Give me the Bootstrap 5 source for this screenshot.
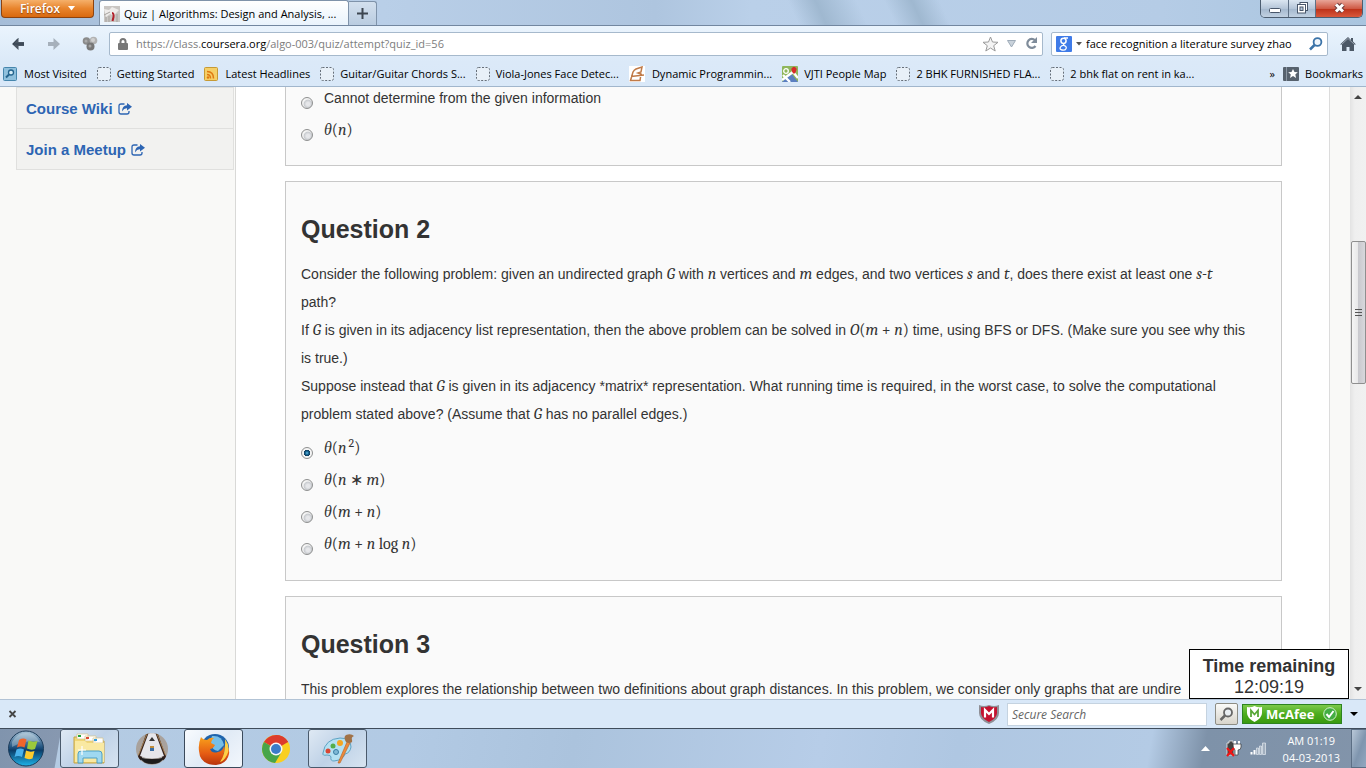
<!DOCTYPE html>
<html lang="en">
<head>
<meta charset="utf-8">
<meta name="viewport" content="width=device-width, initial-scale=1">
<title>Quiz | Algorithms: Design and Analysis, Part 2</title>
<link href="https://cdn.jsdelivr.net/npm/bootstrap@5.3.0/dist/css/bootstrap.min.css" rel="stylesheet">
<style>
body{font-family:"Liberation Sans",Arial,sans-serif;font-size:14px;color:#333;background:#f9f9f7}
svg{flex:none;display:block}
button{border:0;background:none;padding:0}
.ui{font-family:"Open Sans","Noto Sans",sans-serif;font-size:11px;line-height:16px;color:#000}
.ui a{color:#000;text-decoration:none;white-space:nowrap}
/* title bar */
.titlebar{height:26px;background:linear-gradient(65deg,transparent 58%,#9fb8d0 60%,transparent 63%,transparent 65%,#9fb8d0 67%,transparent 69%),linear-gradient(90deg,#a5bdd8,#b9cfe8 28%,#aec5df 48%,#bad0e9 55%,#b5cce6 85%,#a9c5df);border-bottom:1px solid #7287a0}
.fx-btn{width:93px;height:18px;margin-left:1px;background:linear-gradient(#f5b06a,#e8842c 50%,#d9690f);border:1px solid #8c4310;border-top:0;border-radius:0 0 4px 4px;color:#fff;font-weight:600;font-size:12px;text-shadow:0 1px 1px #8c4310}
.page-tab{width:250px;height:25px;margin-left:5px;background:linear-gradient(#fff,#e9f3fc);border:1px solid #7f93aa;border-bottom:0;border-radius:3px 3px 0 0;padding:2px 0 0 4px}
.plus-tab{width:28px;height:24px;background:linear-gradient(#d3e0ee,#b9cce0);border:1px solid #7f93aa;border-left:0;border-bottom:0;border-radius:0 3px 0 0}
.win-btns{height:18px;margin-right:3px;border:1px solid #4c5d70;border-top:0;border-radius:0 0 5px 5px;overflow:hidden}
.win-btns button{width:27px;background:linear-gradient(#dbe6f1,#b4c5d8 50%,#a3b7cd 51%,#c1d1e2)}
.win-btns button+button{border-left:1px solid #5f7186}
.win-btns .closer{width:47px;background:linear-gradient(#e8a598,#cf5a45 50%,#bb3018 51%,#d9583b)}
/* toolbars */
.toolbars{background:linear-gradient(#eaf4fd,#dbe9f8 60%,#d9e8f8);border-bottom:1px solid #a1b6cc}
.navrow{height:35px;padding:0 10px}
.urlbox{margin-left:11px}
.field-box{height:24px;background:#fff;border:1px solid #a6b9cc;border-radius:2px}
.field-box input{border:0;outline:0;background:none;padding:0;min-width:0;font:inherit;color:#000}
.searchbox{flex:0 0 277px}
.grey{color:#7d7d7d}
.bookrow{height:25px;padding:0 3px}
.bk-item{display:flex;align-items:center;gap:6px;margin-right:10px}
/* page */
.viewport{min-height:0;flex:1 1 0}
.side{width:236px;padding-left:16px;border-right:1px solid #d9d9d7}
.side nav{border:1px solid #e0e0de;border-top:0;margin-right:1px}
.side a{display:flex;align-items:center;gap:5px;height:41px;padding:2px 0 0 9px;background:#f2f2f0;border-top:1px solid #e0e0de;color:#2d65b3;font-weight:bold;font-size:15px;text-decoration:none}
.sheet{background:#fff;padding:0 47px 0 49px;border-right:1px solid #dcdcdc;min-width:0}
.quiz{background:#fafafa;border:1px solid #c8c8c8;padding:0 15px;margin-bottom:15px}
.quiz.first{margin-top:-4px;padding-bottom:17px}
.quiz h2{font-size:25px;line-height:30px;font-weight:bold;margin:0;padding:32px 0 16px}
.quiz p{line-height:28px;margin:0;white-space:nowrap}
.opts{padding-top:6px}
.quiz .opts.last{padding-bottom:18px}
.opt{display:flex;height:32px;gap:11px;line-height:28px}
.opt input{appearance:none;width:12px;height:12px;margin:13px 0 0;border:1px solid #8e8f8f;border-radius:50%;background:radial-gradient(circle at 60% 60%,#e6e7ea 20%,#c9ccd0 45%,#f4f4f4 58%)}
.opt input:checked{background:radial-gradient(circle at 50% 50%,#6fc3e8 0,#1a6d9c 20%,#0f3c5c 42%,#f4f4f4 50%)}
.mt{font-family:Cambria,"Liberation Serif",serif;font-size:16px;line-height:20px;font-style:italic}
.mt b{font-weight:normal;font-style:normal}
.mt sup{font-size:12px;font-style:normal;line-height:0;padding-left:2px}
.rail{width:20px;background:#f9f9f7}
.scroller{width:16px;background:linear-gradient(90deg,#e3e3e3,#efefef 30%,#f1f1f1)}
.above{flex:141 1 0}
.below{flex:300 1 0}
.thumb{width:15px;height:143px;border:1px solid #8f8f8f;border-radius:2px;background:linear-gradient(90deg,#f5f5f5,#e8e8e9 45%,#c9c9ce 50%,#d8d8dc)}
.timer{right:17px;bottom:0;width:160px;height:50px;border:1px solid #000;background:#fff;text-align:center;font-size:18px;line-height:21px;padding-top:6px}
/* find bar */
.mcbar{height:29px;background:#d9e8f8;border-top:1px solid #b2c3d5}
.mcbar input{width:200px;height:23px;border:1px solid #c5d3e0;background:#fff;padding:0 4px;font:italic 12px/20px "Open Sans",sans-serif;outline:0}
.mcbar input::placeholder{color:#666;opacity:1;font-size:12px}
.find-btn{width:23px;height:22px;border:1px solid #8d8d85;border-radius:2px;background:linear-gradient(#fafaf8,#d8d5cc)}
.mcafee{width:100px;height:20px;border:1px solid #2d8420;background:linear-gradient(#7cc94a,#4cac1e 50%,#3a9a10);color:#fff;font:bold 13px "Open Sans",sans-serif}
/* taskbar */
.taskbar{height:40px;border-top:1px solid #3f4c5b;background:linear-gradient(100deg,#8094ad 0,#8798b0 60px,#b4cbe3 61px,#b2cae4 30%,#abc3dd 42%,#b7cde8 60%,#afc7e2 70%,#b4cbe5 84%,#7e92a9 88%,#8294aa 100%)}
.task{width:59px;height:39px;display:flex;align-items:center;justify-content:center;border:1px solid transparent;border-radius:3px}
.task.open{border-color:#4a5a6c;background:linear-gradient(135deg,#dfe9f4,#bfd2e7 50%,#d7e4f1)}
.task.active{border-color:#3b4a5b;background:linear-gradient(135deg,#f8fbfe,#e1ebf6 50%,#f3f7fc)}
.tasks{gap:3px}
.clock{color:#fff;font-size:11px;line-height:17px;text-align:center;margin:0 11px 0 16px}
.peek{width:15px;border:1px solid #5b6e84;border-right:0;background:linear-gradient(110deg,#b9c8d8,#7f95ae 55%,#93a8c0)}
</style>
</head>
<body>
<svg width="0" height="0" class="position-absolute" aria-hidden="true">
  <symbol id="blank" viewBox="0 0 14 14"><rect x=".5" y=".5" width="13" height="13" rx="2" fill="#e8f0f8" stroke="#666f79" stroke-dasharray="2 1.5"/></symbol>
  <symbol id="ext" viewBox="0 0 14 12"><path d="M6.500 1H3Q1 1 1 3v6q0 2 2 2h6q2 0 2-2V8" fill="none" stroke="#2d65b3" stroke-width="1.300"/><path d="M9 0l5 3.800L9 7.500V5.300Q6 5 4 8.500q0-6 5-6.300z" fill="#2d65b3"/></symbol>
  <linearGradient id="blue" x2="0" y2="1"><stop stop-color="#a9c4d8"/><stop offset=".45" stop-color="#245783"/><stop offset=".55" stop-color="#0b3c68"/><stop offset="1" stop-color="#1fb4ea"/></linearGradient>
  <linearGradient id="fox" x2="0" y2="1"><stop stop-color="#f9a11b"/><stop offset=".6" stop-color="#e55b13"/><stop offset="1" stop-color="#b8330c"/></linearGradient>
</svg>
<div class="vh-100 d-flex flex-column overflow-hidden">
  <header class="ui flex-shrink-0">
    <div class="titlebar d-flex align-items-start">
      <button class="fx-btn d-flex align-items-center justify-content-center gap-2">Firefox <svg width="7" height="5"><path d="M0 0h7L3.500 4.500z" fill="#fff"/></svg></button>
      <div class="page-tab d-flex align-items-center gap-1 align-self-end">
        <svg width="16" height="16"><rect width="16" height="16" fill="#c9c6c3"/><path d="M0 3l5 1 3-3 7 3-3 3-2 3-4-2-4 3z" fill="#eeecea"/><path d="M0 9l6-3M2 11v5M5 10v6M13 8v8" stroke="#a5a19d"/><path d="M8 7q2 0 1.500 4l-1 4" stroke="#b1202a" stroke-width="2" fill="none"/></svg>
        <span>Quiz | Algorithms: Design and Analysis, ...</span>
      </div>
      <button class="plus-tab d-flex align-items-center justify-content-center align-self-end" aria-label="New tab"><svg width="11" height="11"><path d="M5.500 0v11M0 5.500h11" stroke="#3d4650" stroke-width="2"/></svg></button>
      <div class="win-btns d-flex ms-auto">
        <button aria-label="Minimize" class="d-flex justify-content-center pt-2"><svg width="12" height="5"><rect x=".5" y=".5" width="11" height="4" rx="1" fill="#fff" stroke="#48566a"/></svg></button>
        <button aria-label="Restore" class="d-flex justify-content-center"><svg width="13" height="15"><rect x="4" y="2.500" width="7.500" height="8" fill="#fff" stroke="#48566a"/><rect x="1.500" y="4.500" width="8" height="8.500" fill="#fff" stroke="#48566a"/><rect x="4" y="7" width="3" height="3.500" fill="#b4c5d8" stroke="#48566a"/></svg></button>
        <button aria-label="Close" class="closer d-flex justify-content-center"><svg width="13" height="14"><path d="M3 4.500l7 7M10 4.500l-7 7" stroke="#6c3b3b" stroke-width="5"/><path d="M3 4.500l7 7M10 4.500l-7 7" stroke="#fff" stroke-width="3"/></svg></button>
      </div>
    </div>
    <div class="toolbars">
      <div class="navrow d-flex align-items-center">
        <button aria-label="Back"><svg width="16" height="16"><path d="M8.500 2L2 8l6.500 6v-4H14V6H8.500z" fill="#4a5562"/><path d="M8 2.500L3 8h11" fill="none" stroke="#33404e"/></svg></button>
        <button aria-label="Forward" class="ms-3 ps-1"><svg width="16" height="16"><path d="M7.500 2L14 8l-6.500 6v-4H2V6h5.500z" fill="#a6b0bb"/></svg></button>
        <button aria-label="Add-ons" class="ms-3 ps-1"><svg width="16" height="16"><circle cx="4.500" cy="5" r="3.800" fill="#8b8b8b"/><circle cx="11.500" cy="4.500" r="3.800" fill="#b2b2b2"/><circle cx="8.500" cy="10.500" r="4" fill="#777"/><circle cx="4" cy="5" r="1.500" fill="#aaa"/><circle cx="11" cy="4" r="2" fill="#d0d0d0"/><circle cx="8" cy="10" r="1.500" fill="#a6a6a6"/></svg></button>
        <div class="urlbox field-box d-flex align-items-center flex-grow-1 ps-2 pe-1 gap-2">
          <svg width="10" height="12"><path d="M2.500 6V3.500q0-2.500 2.500-2.500t2.500 2.500V6" fill="none" stroke="#777" stroke-width="2"/><rect y="5" width="10" height="7" rx="1" fill="#777"/></svg>
          <a href="#" class="flex-grow-1"><span class="grey">https://class.</span>coursera.org<span class="grey">/algo-003/quiz/attempt?quiz_id=56</span></a>
          <svg width="17" height="16"><path d="M8.500 1l2 5 5.500.3-4.300 3.400 1.500 5.300-4.700-3-4.700 3 1.500-5.300L1 6.300 6.500 6z" fill="#f4f4f4" stroke="#9b9b9b"/></svg>
          <svg width="10" height="8"><path d="M.5.500h8L4.500 7z" fill="#c9d2db" stroke="#9eabb8"/></svg>
          <svg width="13" height="13"><path d="M10 3.200A4.500 4.500 0 1 0 10.500 9" fill="none" stroke="#7f8c9a" stroke-width="2.200"/><path d="M12 0v6H6z" fill="#7f8c9a"/></svg>
        </div>
        <div class="searchbox field-box d-flex align-items-center ms-2 px-1 gap-1">
          <svg width="16" height="16"><rect width="16" height="16" rx="1" fill="#3f7be8"/><circle cx="7.500" cy="4.800" r="2.600" fill="none" stroke="#fff" stroke-width="1.500"/><path d="M8 2h4M8.500 7.500q-2 1.200 0 2.200 2.500 1 1.500 3t-4 1.300-1.500-3 4-1.500" fill="none" stroke="#fff" stroke-width="1.300"/></svg>
          <svg width="6" height="4"><path d="M0 0h6L3 3.500z" fill="#555"/></svg>
          <input class="flex-grow-1" aria-label="Search" value="face recognition a literature survey zhao">
          <svg width="14" height="14"><circle cx="8.500" cy="5" r="3.900" fill="#eff6fc" stroke="#3b73a8" stroke-width="1.800"/><path d="M5.500 8L1 12.500" stroke="#3b73a8" stroke-width="2.500"/></svg>
        </div>
        <button aria-label="Home" class="ms-2 ps-1"><svg width="16" height="16"><path d="M8 1L0 8.500h2V15h4.500v-4h3v4H14V8.500h2L13 5.500V2h-2v2z" fill="#4c5866"/><path d="M2 8l6-5.500L14 8" fill="none" stroke="#a9b4bf" stroke-width=".8"/></svg></button>
      </div>
      <nav class="bookrow d-flex align-items-center">
        <a class="bk-item" href="#"><svg width="15" height="16"><rect x=".5" y="1.500" width="13" height="13" rx="1" fill="#8fc0dd" stroke="#4686ad"/><circle cx="8" cy="6.500" r="2.500" fill="#d6edf8" stroke="#24648e" stroke-width="1.300"/><path d="M6 8.500L3 11.500" stroke="#24648e" stroke-width="2"/></svg>Most Visited</a>
        <a class="bk-item" href="#"><svg width="14" height="14"><use href="#blank"/></svg>Getting Started</a>
        <a class="bk-item" href="#"><svg width="15" height="16"><rect x=".5" y="1.500" width="13" height="13" rx="1" fill="#f5cf67" stroke="#c69a35"/><path d="M3 5.500q6.500 0 6.500 7M3 8.500q3.500 0 3.500 4" fill="none" stroke="#df7911" stroke-width="1.500"/><circle cx="4" cy="11.500" r="1.200" fill="#df7911"/></svg>Latest Headlines</a>
        <a class="bk-item" href="#"><svg width="14" height="14"><use href="#blank"/></svg>Guitar/Guitar Chords S...</a>
        <a class="bk-item" href="#"><svg width="14" height="14"><use href="#blank"/></svg>Viola-Jones Face Detec...</a>
        <a class="bk-item" href="#"><svg width="17" height="16"><rect width="16" height="16" fill="#fff"/><path d="M1.500 14.500L4 6q1-2 3-3l6-2-1 5-3 1 3 1-1 6.500zM2 10.500L15 9" fill="none" stroke="#c07a47" stroke-width="1.500"/></svg>Dynamic Programmin...</a>
        <a class="bk-item" href="#"><svg width="16" height="16"><rect width="16" height="16" rx="1" fill="#8fb65c"/><path d="M0 16L9 7l7 9z" fill="#5b7fc0"/><path d="M1 9l7 7M0 14l11-8 5 6" fill="none" stroke="#fff" stroke-width="2.400"/><circle cx="4" cy="5" r="2.300" fill="none" stroke="#fff" stroke-width="1.300"/><path d="M12 8Q9 5 9.500 2.500 12-1 14.500 2.500 15 5 12 8z" fill="#d82b2b"/></svg>VJTI People Map</a>
        <a class="bk-item" href="#"><svg width="14" height="14"><use href="#blank"/></svg>2 BHK FURNISHED FLA...</a>
        <a class="bk-item" href="#"><svg width="14" height="14"><use href="#blank"/></svg>2 bhk flat on rent in ka...</a>
        <span class="ms-auto me-2">»</span>
        <a class="bk-item me-0" href="#"><svg width="16" height="14"><rect width="16" height="14" rx="1" fill="#56616d"/><path d="M3.500 0v14" stroke="#8a96a3"/><path d="M10 2l1.500 3 3.300.3-2.500 2.200.8 3.500-3.100-1.900L7 11l.8-3.500L5.200 5.300 8.500 5z" fill="#fff"/></svg>Bookmarks</a>
      </nav>
    </div>
  </header>

  <div class="viewport d-flex position-relative overflow-hidden">
    <aside class="side flex-shrink-0">
      <nav>
        <a href="#">Course Wiki <svg width="14" height="12"><use href="#ext"/></svg></a>
        <a href="#">Join a Meetup <svg width="14" height="12"><use href="#ext"/></svg></a>
      </nav>
    </aside>
    <main class="sheet flex-grow-1">
      <section class="quiz first">
        <div class="opt"><input type="radio" name="q1" id="q1c"><label for="q1c">Cannot determine from the given information</label></div>
        <div class="opt"><input type="radio" name="q1" id="q1d"><label for="q1d" class="mt pt-1">θ<b>(</b>n<b>)</b></label></div>
      </section>
      <section class="quiz">
        <h2>Question 2</h2>
        <p>Consider the following problem: given an undirected graph <span class="mt">G</span> with <span class="mt">n</span> vertices and <span class="mt">m</span> edges, and two vertices <span class="mt">s</span> and <span class="mt">t</span>, does there exist at least one <span class="mt">s-t</span><br>path?</p>
        <p>If <span class="mt">G</span> is given in its adjacency list representation, then the above problem can be solved in <span class="mt">O<b>(</b>m <b>+</b> n<b>)</b></span> time, using BFS or DFS. (Make sure you see why this<br>is true.)</p>
        <p>Suppose instead that <span class="mt">G</span> is given in its adjacency *matrix* representation. What running time is required, in the worst case, to solve the computational<br>problem stated above? (Assume that <span class="mt">G</span> has no parallel edges.)</p>
        <div class="opts last">
          <div class="opt"><input type="radio" name="q2" id="q2a" checked><label for="q2a" class="mt pt-1">θ<b>(</b>n<sup>2</sup><b>)</b></label></div>
          <div class="opt"><input type="radio" name="q2" id="q2b"><label for="q2b" class="mt pt-1">θ<b>(</b>n <b>∗</b> m<b>)</b></label></div>
          <div class="opt"><input type="radio" name="q2" id="q2c"><label for="q2c" class="mt pt-1">θ<b>(</b>m <b>+</b> n<b>)</b></label></div>
          <div class="opt"><input type="radio" name="q2" id="q2d"><label for="q2d" class="mt pt-1">θ<b>(</b>m <b>+</b> n <b>log</b> n<b>)</b></label></div>
        </div>
      </section>
      <section class="quiz pb-4">
        <h2>Question 3</h2>
        <p class="overflow-hidden">This problem explores the relationship between two definitions about graph distances. In this problem, we consider only graphs that are undire</p>
      </section>
    </main>
    <div class="rail flex-shrink-0"></div>
    <div class="scroller flex-shrink-0 d-flex flex-column align-items-center py-2">
      <svg width="8" height="4"><path d="M4 0l4 4H0z" fill="#444"/></svg>
      <div class="above"></div>
      <div class="thumb d-flex align-items-center justify-content-center"><svg width="7" height="9"><path d="M0 1.500h7M0 4.500h7M0 7.500h7" stroke="#555"/></svg></div>
      <div class="below"></div>
      <svg width="8" height="4"><path d="M0 0h8L4 4z" fill="#444"/></svg>
    </div>
    <div class="timer position-absolute"><strong class="d-block">Time remaining</strong>12:09:19</div>
  </div>

  <div class="mcbar ui d-flex align-items-center flex-shrink-0">
    <button aria-label="Close bar" class="ms-2"><svg width="9" height="8"><path d="M1.500 1l6 6M7.500 1l-6 6" stroke="#444" stroke-width="1.800"/></svg></button>
    <svg class="ms-auto me-2" width="20" height="20"><path d="M0 1q5 2 10 0 5 2 10 0v8q0 7-10 11Q0 16 0 9z" fill="#8f8f96"/><path d="M2 3q4 1 8-1 4 2 8 1v6q0 5-8 9-8-4-8-9z" fill="#c41230"/><path d="M6 13.500V6l4 4 4-4v7.500" fill="none" stroke="#fff" stroke-width="2.200"/></svg>
    <input type="text" aria-label="Secure Search" placeholder="Secure Search">
    <button class="find-btn ms-2 d-flex align-items-center justify-content-center" aria-label="Search"><svg width="15" height="15"><circle cx="9" cy="5.500" r="4" fill="#e9eef2" stroke="#666" stroke-width="1.800"/><path d="M6 8.500L1.500 13" stroke="#666" stroke-width="2.500"/></svg></button>
    <button class="mcafee ms-1 d-flex align-items-center px-1"><svg class="me-1" width="15" height="16"><path d="M0 1q4 1 7.500-1Q11 2 15 1v6q0 5-7.500 9Q0 12 0 7z" fill="#fff"/><path d="M4 11V4.500l3.500 4 3.500-4V11" fill="none" stroke="#58a838" stroke-width="1.800"/></svg><span>McAfee</span><svg class="ms-auto" width="14" height="14"><circle cx="7" cy="7" r="6.300" fill="#43ad43" stroke="#d4f2cb"/><path d="M3.500 7l2.500 3 4.500-6" fill="none" stroke="#fff" stroke-width="2"/></svg></button>
    <svg class="mx-2" width="8" height="4"><path d="M0 0h8L4 4z"/></svg>
  </div>

  <footer class="taskbar ui d-flex flex-shrink-0">
    <button aria-label="Start" class="px-2 me-2"><svg width="36" height="37" viewBox="0 0 36 37"><circle cx="18" cy="18.500" r="17.500" fill="url(#blue)" stroke="#1d3c5a"/><path d="M4 12Q9 3 18 3t14 9q-14-3-28 5z" fill="#dbe7ef" opacity=".35"/><path d="M11 10q4-2.500 7.500-.5L16.500 17.500q-4-2-7.500 0z" fill="#f0652c"/><path d="M20.500 10.500q4 2 9 .5l-2.500 8q-4 1.500-8-.5z" fill="#9bc93c"/><path d="M8.500 19.500q4-2 7.500 0L14 27q-4-2-7.500 0z" fill="#49b2ec"/><path d="M18 20.500q4 2 8.500.5L24.500 28.500q-4 1.500-8-.5z" fill="#fdcb2d"/></svg></button>
    <div class="tasks d-flex">
      <button class="task open" aria-label="Windows Explorer"><svg width="34" height="32"><path d="M1 4h8l2 2h13l2 2h5v22H1z" fill="#f0d676" stroke="#c3a346"/><path d="M4 1h11v5H4zM12 3h11v5H12zM20 5h10v5H20z" fill="#fff" stroke="#d5c48b" stroke-width=".7"/><path d="M5 2h3v2H5z" fill="#22a53b"/><path d="M13 4h3v2h-3z" fill="#dc4b31"/><path d="M21 6h3v2h-3z" fill="#319ee0"/><path d="M2 8h10l2 2h17v19H2z" fill="#f9e9a2"/><path d="M5 30V21q0-3 3-3h18q3 0 3 3v9h-5v-5H10v5z" fill="#9fd8f0" stroke="#4d9fc5"/><path d="M9 13v9M5 17h8" stroke="#fff" stroke-width="1.200"/></svg></button>
      <button class="task" aria-label="Ball"><svg width="34" height="34"><circle cx="17" cy="17" r="16" fill="#a9a29c"/><path d="M11 2.200L3 24.500q1 2.500 3 4L15 1.200zM23 2.200l8 22.300q-1 2.500-3 4L19 1.200z" fill="#33211c"/><path d="M13.500 1.300h7L29 24q-12 5-24 0z" fill="#e6e6ea"/><path d="M12 2L3.500 23M22 2l8.500 21" stroke="#b98e57" stroke-width=".8"/><path d="M4.500 25.500q12.500 3 25 0-2 3-5 5-7.500 3-15 0-3-2-5-5z" fill="#1e1c1c"/><path d="M14 9h6l-3-4z" fill="#333"/><rect x="15" y="14" width="4" height="5" fill="#c08d3b"/><path d="M15 16h4v3h-4z" fill="#3a6ea5"/></svg></button>
      <button class="task active" aria-label="Mozilla Firefox"><svg width="32" height="32"><circle cx="17" cy="15" r="14" fill="#1f64ac"/><path d="M14 3q10-1 12 9l-6 6q-6-1-8-8z" fill="#76bfe8"/><path d="M3 4q2 3 6 3 3-3 7-2-3 2-3 5l4 2q-2 4-5 4 2 5 8 3 5-1 6-6 2 4-1 9 4-4 2-12 5 6 4 11-2 10-13 11Q2 32 1 18 0 11 3 4z" fill="url(#fox)"/><path d="M27 6q6 8 2 16-3 6-7 7 6-8 5-23z" fill="#ffd044"/></svg></button>
      <button class="task" aria-label="Google Chrome"><svg width="28" height="28"><circle cx="14" cy="14" r="14" fill="#f9cf20"/><path d="M14 14L1.900 7A14 14 0 0 1 26.100 7z" fill="#dc3b2d"/><path d="M14 0a14 14 0 0 1 12.100 7H14z" fill="#dc3b2d"/><path d="M1.900 7A14 14 0 0 0 13 28l6-10-5-4z" fill="#47a549"/><circle cx="14" cy="14" r="6.500" fill="#f7f7f7"/><circle cx="14" cy="14" r="5" fill="#3b7cc9"/></svg></button>
      <button class="task open" aria-label="Paint"><svg width="34" height="32"><path d="M2 20Q4 6 19 5q11 0 11 9-1 6-6 7-2 6-11 7-4 0-3-4 0-2-4-2-5 1-4-2z" fill="#b4e1f2" stroke="#5ea3c3"/><circle cx="7" cy="18" r="2.500" fill="#d94634"/><circle cx="12" cy="13" r="2.500" fill="#54ae4a"/><circle cx="19" cy="10" r="3" fill="#f5a623"/><circle cx="15" cy="19" r="2.500" fill="#7fb9d6" stroke="#3a7da3"/><path d="M17 30L26 9l3 1-10 20z" fill="#ed8a3c" stroke="#b75f1d" stroke-width=".6"/><path d="M25 9q-3-5 0-7 5-2 8 1-3 1-2 4t-3 3z" fill="#a17247"/></svg></button>
    </div>
    <div class="d-flex ms-auto align-items-center gap-3">
      <svg width="9" height="5"><path d="M4.500 0L9 5H0z" fill="#fff"/></svg>
      <div class="d-flex gap-2 align-items-center">
        <svg width="16" height="17"><path d="M1 3h2V1h4v2h1v12H1z" fill="#444" stroke="#eee" stroke-width=".8"/><path d="M9 1v3M13 1v3" stroke="#fff" stroke-width="2"/><path d="M7 4h8v3q0 3-3 3v5H9v-5Q7 9 7 4z" fill="#fff" stroke="#333" stroke-width=".7"/><path d="M1 8l7 8M8 8l-7 8" stroke="#f01414" stroke-width="2.200"/></svg>
        <svg width="17" height="13"><path d="M.5 10h2v2.500h-2zM3.500 8h2v4.500h-2z" fill="#fff"/><path d="M6.500 6h2v6.500h-2zM9.500 4h2v8.500h-2zM12.500 1h3v11.500h-3z" fill="#a2afbe" stroke="#e4eaf0" stroke-width=".7"/></svg>
      </div>
    </div>
    <div class="clock align-self-center">AM 01:19<br>04-03-2013</div>
    <div class="peek"></div>
  </footer>
</div>
<script src="https://cdn.jsdelivr.net/npm/bootstrap@5.3.0/dist/js/bootstrap.bundle.min.js"></script>
</body>
</html>
